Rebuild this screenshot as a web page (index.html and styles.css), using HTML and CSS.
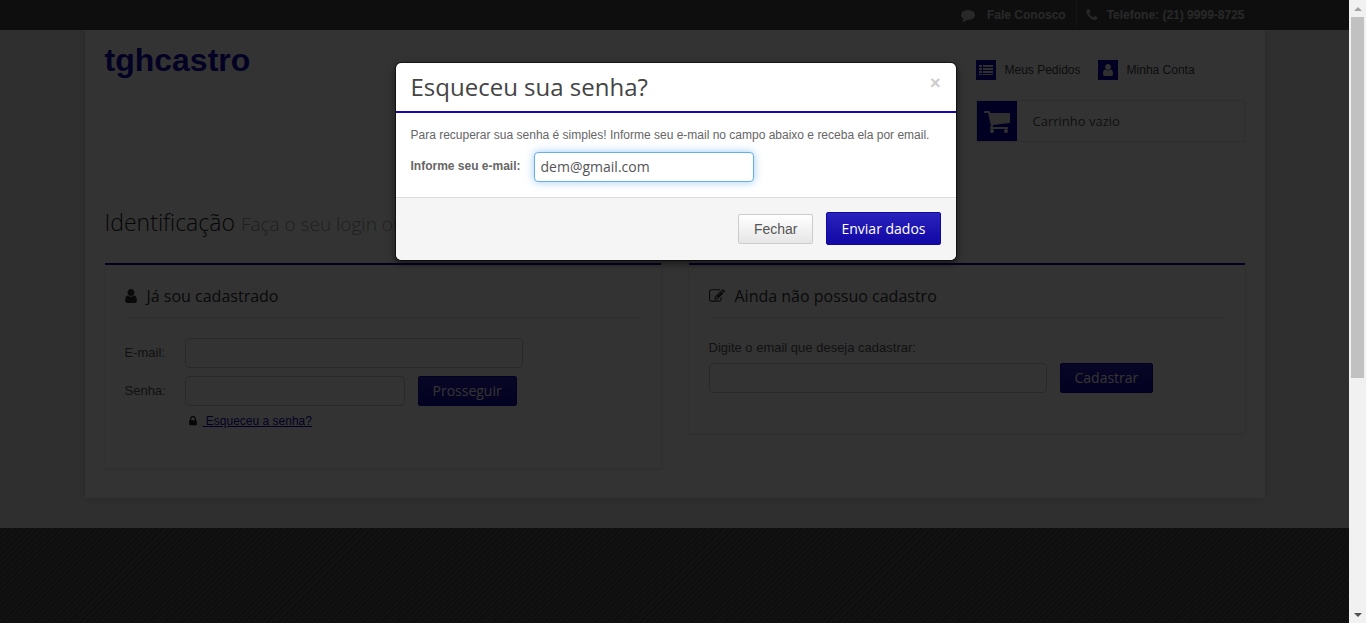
FILE: index.html
```html
<!DOCTYPE html>
<html lang="pt-BR">
<head>
<meta charset="utf-8">
<title>tghcastro - Identificação</title>
<link rel="stylesheet" href="styles.css">
</head>
<body>
<svg class="sprite" aria-hidden="true">
  <symbol id="i-user" viewBox="256 128 1280 1536"><path d="M1536 1399q0 109-62.5 187t-150.5 78h-854q-88 0-150.5-78t-62.5-187q0-85 8.5-160.5t31.5-152 58.5-131 94-89 134.5-34.5q131 128 313 128t313-128q76 0 134.5 34.5t94 89 58.5 131 31.5 152 8.5 160.5zm-256-887q0 159-112.5 271.5t-271.5 112.5-271.5-112.5-112.5-271.5 112.5-271.5 271.5-112.5 271.5 112.5 112.5 271.5z"/></symbol>
  <symbol id="i-cart" viewBox="0 0 1792 1792"><path d="M704 1536q0 52-38 90t-90 38-90-38-38-90 38-90 90-38 90 38 38 90zm896 0q0 52-38 90t-90 38-90-38-38-90 38-90 90-38 90 38 38 90zm128-1088v512q0 24-16.500 42.500t-40.500 21.500l-1044 122q13 60 13 70 0 16-24 64h920q26 0 45 19t19 45-19 45-45 19h-1024q-26 0-45-19t-19-45q0-11 8-31.500t16-36 21.500-40 15.500-29.500l-177-823h-204q-26 0-45-19t-19-45 19-45 45-19h256q16 0 28.500 6.500t19.500 15.500 13 24.500 8 26 5.500 29.500 4.500 26h1201q26 0 45 19t19 45z"/></symbol>
  <symbol id="i-lock" viewBox="0 0 1792 1792"><path d="M640 768h512v-192q0-106-75-181t-181-75-181 75-75 181v192zm832 96v576q0 40-28 68t-68 28h-960q-40 0-68-28t-28-68v-576q0-40 28-68t68-28h32v-192q0-184 132-316t316-132 316 132 132 316v192h32q40 0 68 28t28 68z"/></symbol>
  <symbol id="i-edit" viewBox="0 0 1792 1792"><path d="M888 1184l116-116-152-152-116 116v56h96v96h56zm440-720q-16-16-33 1l-350 350q-17 17-1 33t33-1l350-350q17-17 1-33zm80 594v190q0 119-84.500 203.500t-203.500 84.500h-832q-119 0-203.500-84.500t-84.500-203.500v-832q0-119 84.500-203.500t203.500-84.500h832q63 0 117 25 15 7 18 23 3 17-9 29l-49 49q-14 14-32 8-23-6-45-6h-832q-66 0-113 47t-47 113v832q0 66 47 113t113 47h832q66 0 113-47t47-113v-126q0-13 9-22l64-64q15-15 35-7t20 29zm-96-738l288 288-672 672h-288v-288zm444 132l-92 92-288-288 92-92q28-28 68-28t68 28l152 152q28 28 28 68t-28 68z"/></symbol>
  <symbol id="i-phone" viewBox="0 0 1792 1792"><path d="M1600 1240q0 27-10 70.500t-21 68.500q-21 50-122 106-94 51-186 51-27 0-52.500-3.500t-57.500-12.500-47.500-14.500-55.500-20.500-49-18q-98-35-175-83-128-79-264.500-215.500t-215.500-264.500q-48-77-83-175-3-9-18-49t-20.500-55.500-14.500-47.500-12.500-57.500-3.500-52.500q0-92 51-186 56-101 106-122 25-11 68.500-21t70.500-10q14 0 21 3 18 6 53 76 11 19 30 54t35 63.500 31 53.500q3 4 17.500 25t21.500 35.500 7 28.500q0 20-28.500 50t-62 55-62 53-28.500 46q0 9 5 22.500t8.500 20.500 14 24 11.500 19q76 137 174 235t235 174q2 1 19 11.500t24 14 20.500 8.500 22.500 5q18 0 46-28.500t53-62 55-62 50-28.500q14 0 28.500 7t35.500 21.500 25 17.500q25 15 53.500 31t63.500 35 54 30q70 35 76 53 3 7 3 21z"/></symbol>
  <symbol id="i-comment" viewBox="0 0 1792 1792"><path d="M1792 896q0 174-120 321.500t-326 233-450 85.500q-70 0-145-8-198 175-460 242-49 14-114 22h-5q-15 0-27-10.500t-16-27.500v-1q-3-4-.5-12t2-10 4.500-9.500l6-9 7-8.500 8-9q7-8 31-34.500t34.500-38 31-39.500 32.500-51 27-59 26-76q-157-89-247.500-220t-90.500-281q0-174 120-321.500t326-233 450-85.500 450 85.500 326 233 120 321.500z"/></symbol>
  <symbol id="i-list" viewBox="0 0 14 14"><path d="M0 2h3v2H0zM4 2h10v2H4zM0 5h3v2H0zM4 5h10v2H4zM0 8h3v2H0zM4 8h10v2H4zM0 11h3v1H0zM4 11h10v1H4z"/></symbol>
</svg>

<div class="viewport">
  <div class="page">
    <div class="topbar">
      <div class="container topbar-items">
        <a class="topbar-item" href="#"><svg class="icon icon-14"><use href="#i-comment"/></svg>Fale Conosco</a>
        <span class="topbar-item"><svg class="icon icon-14"><use href="#i-phone"/></svg>Telefone: (21) 9999-8725</span>
      </div>
    </div>

    <div class="container sheet">
      <header class="header">
        <a class="logo" href="#">tghcastro</a>
        <div class="account">
          <nav class="account-nav">
            <a class="account-link" href="#"><span class="tile"><svg class="icon icon-14"><use href="#i-list"/></svg></span>Meus Pedidos</a>
            <a class="account-link" href="#"><span class="tile"><svg class="icon icon-12"><use href="#i-user"/></svg></span>Minha Conta</a>
          </nav>
          <a class="cart" href="#"><span class="tile tile-lg"><svg class="icon icon-28"><use href="#i-cart"/></svg></span>Carrinho vazio</a>
        </div>
      </header>

      <main class="content">
        <h1 class="title">Identificação <small class="subtitle">Faça o seu login ou</small></h1>
        <div class="panels">
          <section class="panel">
            <h2 class="panel-title"><svg class="icon icon-user"><use href="#i-user"/></svg>Já sou cadastrado</h2>
            <form class="login">
              <div class="row"><label class="row-label" for="email">E-mail:</label><input class="field field-lg" id="email" type="email"></div>
              <div class="row"><label class="row-label" for="senha">Senha:</label><input class="field field-md" id="senha" type="password"><button class="btn btn-primary" type="button">Prosseguir</button></div>
              <p class="forgot"><svg class="icon icon-12"><use href="#i-lock"/></svg><a class="forgot-link" href="#">&nbsp;Esqueceu a senha?</a></p>
            </form>
          </section>
          <section class="panel">
            <h2 class="panel-title"><svg class="icon icon-16"><use href="#i-edit"/></svg>Ainda não possuo cadastro</h2>
            <form class="signup">
              <label class="signup-label" for="novo">Digite o email que deseja cadastrar:</label>
              <div class="row"><input class="field field-lg" id="novo" type="email"><button class="btn btn-primary" type="button">Cadastrar</button></div>
            </form>
          </section>
        </div>
      </main>
    </div>
    <footer class="footer"></footer>
  </div>

  <div class="backdrop"></div>
  <div class="modal" role="dialog" aria-labelledby="modal-title">
    <div class="modal-header">
      <h3 class="modal-title" id="modal-title">Esqueceu sua senha?</h3>
      <button class="close" type="button" aria-label="Fechar janela">×</button>
    </div>
    <div class="modal-body">
      <p class="modal-text">Para recuperar sua senha é simples! Informe seu e-mail no campo abaixo e receba ela por email.</p>
      <div class="row"><label class="modal-label" for="recuperar">Informe seu e-mail:</label><input class="field field-md field-focus" id="recuperar" type="email" value="dem@gmail.com"></div>
    </div>
    <div class="modal-footer">
      <button class="btn btn-plain" type="button">Fechar</button>
      <button class="btn btn-primary btn-send" type="button">Enviar dados</button>
    </div>
  </div>
</div>

<div class="scrollbar" aria-hidden="true">
  <span class="arrow arrow-up"></span>
  <span class="thumb"></span>
  <span class="arrow arrow-down"></span>
</div>
</body>
</html>
```

FILE: styles.css
```css
*, *::before, *::after { box-sizing: border-box; }

body {
  margin: 0;
  height: 100vh;
  display: flex;
  overflow: hidden;
  font: 12px/20px "Liberation Sans", Arial, sans-serif;
  color: #555;
}

h1, h2, h3, p { margin: 0; font-weight: 400; }
a { color: inherit; text-decoration: none; }

.sprite { display: none; }
.icon { flex: none; fill: currentColor; }
.icon-12 { width: 12px; height: 12px; }
.icon-14 { width: 14px; height: 14px; }
.icon-16 { width: 16px; height: 16px; }
.icon-28 { width: 28px; height: 28px; }
.icon-user { width: 12px; height: 14px; }

.viewport { flex: 1; position: relative; overflow: hidden; }
.page { min-height: 100%; display: flex; flex-direction: column; background: #ebebeb; }
.container { width: 100%; max-width: 1180px; margin: 0 auto; }

/* Top bar */
.topbar { background: #484848; color: #c8c8c8; font-weight: 700; }
.topbar-items { display: flex; justify-content: flex-end; padding: 0 20px; }
.topbar-item { display: flex; align-items: center; gap: 12px; height: 30px; padding-right: 10px; }
.topbar-item + .topbar-item { padding: 0 0 0 8px; gap: 8px; border-left: 1px solid #666; }

/* Sheet */
.sheet {
  margin-bottom: 30px;
  padding: 0 20px 30px;
  background: #fff;
  box-shadow: 0 0 8px rgba(0, 0, 0, .2);
}
.header { display: flex; justify-content: space-between; height: 150px; }
.logo { padding-top: 10px; font-size: 32px; line-height: 40px; font-weight: 700; color: #1208ad; }
.account { width: 269px; padding-top: 30px; }
.account-nav { display: flex; gap: 17px; color: #444; }
.account-link { display: flex; align-items: center; gap: 9px; }
.tile { display: flex; align-items: center; justify-content: center; width: 20px; height: 20px; background: #0c03a8; color: #eee; }
.tile-lg { width: 40px; height: 40px; }
.cart {
  display: flex;
  align-items: center;
  gap: 16px;
  margin-top: 20px;
  border: 1px solid #e5e5e5;
  font-family: "Open Sans", sans-serif;
  font-size: 13px;
}

.content { border-top: 1px solid #f7f7f7; padding-top: 26px; }
.title { font: 300 23px/30px "Open Sans", sans-serif; color: #222; }
.subtitle { font-size: 19px; color: #999; }

/* Panels */
.panels { display: grid; grid-template-columns: 1fr 1fr; gap: 28px; align-items: start; margin-top: 24px; }
.panel { padding: 20px 20px 40px; border-top: 2px solid #1208ad; box-shadow: 0 1px 3px rgba(0, 0, 0, .15); }
.panel-title {
  display: flex;
  align-items: center;
  gap: 10px;
  padding-bottom: 10px;
  border-bottom: 1px solid #e5e5e5;
  font: 16px/22px "Open Sans", sans-serif;
  color: #333;
}
.login { display: grid; gap: 8px; padding-top: 20px; font-size: 13px; }
.row { display: flex; align-items: center; }
.row-label { width: 60px; }
.signup { padding-top: 20px; font-size: 13px; }
.signup-label { display: block; margin-bottom: 5px; }
.forgot { display: flex; align-items: center; gap: 4px; margin: -3px 0; padding-left: 62px; font-size: 12px; color: #222; }
.forgot-link { color: #1208ad; text-decoration: underline; }

/* Controls */
.field {
  height: 30px;
  padding: 0 6px 2px;
  border: 1px solid #ccc;
  border-radius: 4px;
  background: #fff;
  font: 14px/20px "Open Sans", sans-serif;
  color: #555;
  outline: none;
}
.field-md { width: 220px; }
.field-lg { width: 338px; }
.field-focus { border-color: #66afe9; box-shadow: 0 0 8px rgba(82, 168, 236, .6); }
.btn {
  height: 30px;
  padding: 0 14px;
  border: 1px solid #1208a0;
  border-radius: 2px;
  font: 14px/20px "Open Sans", sans-serif;
}
.btn-primary { background: linear-gradient(#2a22bd, #1208a5); color: #fff; }
.row .btn { margin-left: 13px; }
.btn-send { height: 33px; }
.btn-plain {
  padding: 0 15px;
  border-color: #ccc;
  background: linear-gradient(#fff, #e6e6e6);
  font-family: "Liberation Sans", Arial, sans-serif;
  color: #555;
}

/* Footer */
.footer { flex: 1; background: repeating-linear-gradient(135deg, #585858 0 3px, #444 3px 4px); }

/* Dialog */
.backdrop { position: absolute; inset: 0; background: rgba(0, 0, 0, .8); }
.modal {
  position: absolute;
  top: 62px;
  left: 50%;
  width: 562px;
  margin-left: -280px;
  border: 1px solid rgba(0, 0, 0, .5);
  border-radius: 6px;
  background: #fff;
  background-clip: padding-box;
  box-shadow: 0 3px 7px rgba(0, 0, 0, .5);
  color: #666;
}
.modal-header {
  display: flex;
  align-items: center;
  justify-content: space-between;
  padding: 9px 15px;
  border-bottom: 2px solid #1208ad;
}
.modal-title { font: 24px/30px "Open Sans", sans-serif; color: #444; }
.close { padding: 0; border: 0; background: none; font: 700 18px/20px "Liberation Sans", Arial, sans-serif; color: #ccc; margin-bottom: 8px; }
.modal-body { padding: 12px 15px 15px; }
.modal-text { margin-bottom: 7px; white-space: nowrap; }
.modal-label { margin: 0 13px 3px 0; font-weight: 700; }
.modal-footer {
  display: flex;
  align-items: center;
  justify-content: flex-end;
  gap: 13px;
  padding: 14px 15px 15px;
  border-top: 1px solid #ddd;
  border-radius: 0 0 6px 6px;
  background: #f5f5f5;
}

/* Window scrollbar */
.scrollbar { display: flex; flex-direction: column; align-items: center; width: 17px; padding: 0 2px; background: #f1f1f1; }
.thumb { width: 13px; height: 58%; background: #c1c1c1; }
.arrow { flex: none; display: flex; align-items: center; justify-content: center; height: 17px; }
.arrow::before { content: ""; border: 4px solid transparent; }
.arrow-up::before { border-top: 0; border-bottom-color: #a3a3a3; }
.arrow-down { margin-top: auto; }
.arrow-down::before { border-bottom: 0; border-top-color: #505050; }
```
